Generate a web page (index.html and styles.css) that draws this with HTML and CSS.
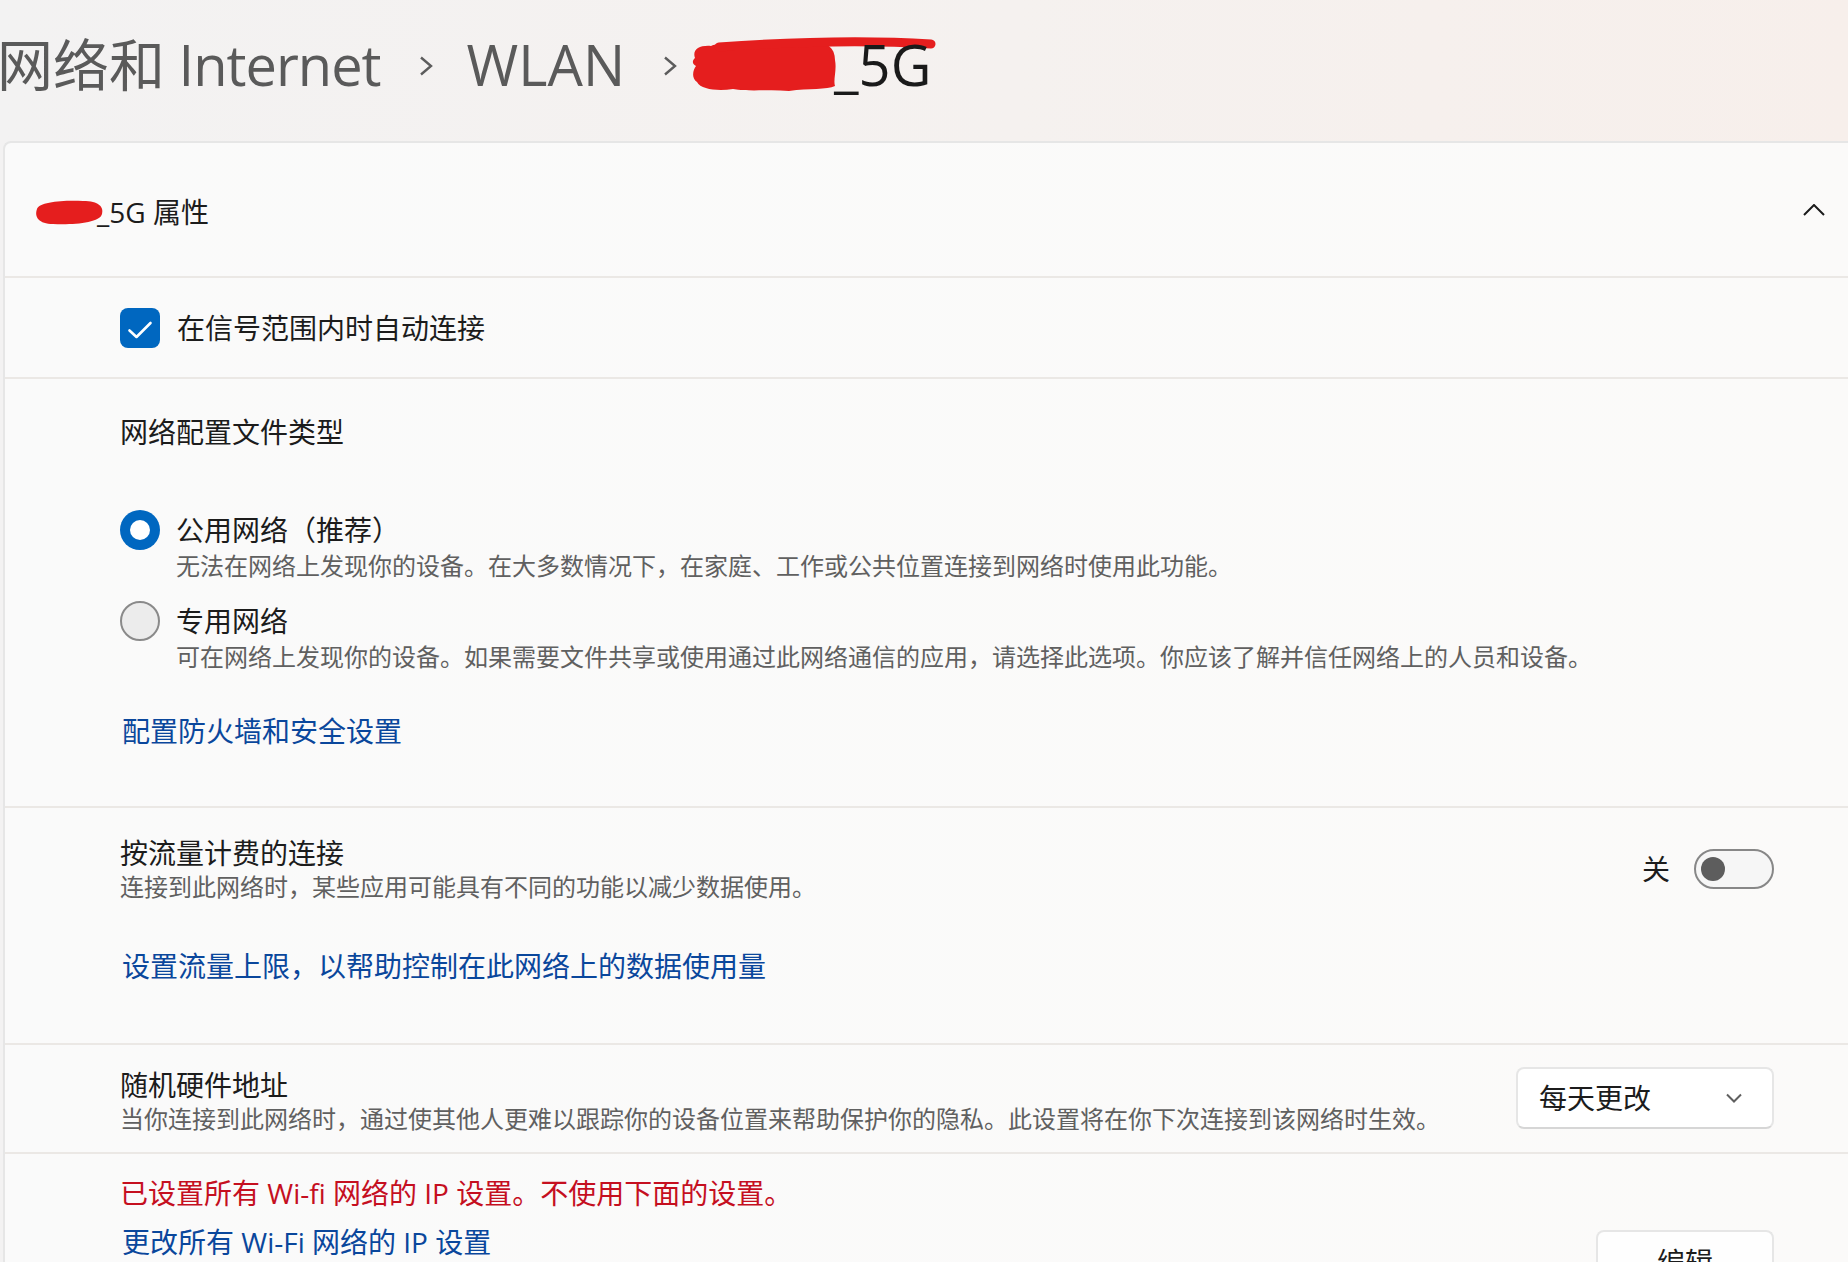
FILE: index.html
```html
<!DOCTYPE html>
<html lang="zh-CN">
  <head>
    <meta charset="UTF-8" />
    <meta name="viewport" content="width=device-width, initial-scale=1.0" />
    <title>WLAN 属性 - 设置</title>
    <link rel="stylesheet" href="styles.css">
  </head>
  <body>
    <header class="breadcrumb">
      <span class="crumb crumb-first"><span class="crumb-cjk">网络和</span> Internet</span>
      <svg class="crumb-sep" width="14" height="20" viewBox="0 0 14 20">
        <polyline points="2,1.5 12,10 2,18.5" />
      </svg>
      <span class="crumb">WLAN</span>
      <svg class="crumb-sep" width="14" height="20" viewBox="0 0 14 20">
        <polyline points="2,1.5 12,10 2,18.5" />
      </svg>
      <span class="crumb crumb-current">
        <svg class="redact" width="145" height="56" viewBox="0 0 145 56">
          <path d="M6,22 C3,14 10,9 22,10 C30,6 48,9 60,7 C80,5 100,8 120,6 C136,5 146,10 146,24 C148,34 144,44 146,50 C138,54 120,52 100,55 C80,53 62,56 44,53 C30,55 12,54 8,46 C2,42 4,34 7,30 C2,27 4,24 6,22 Z" />
          <path class="redact-stroke" d="M30,11 C100,6 180,4 242,8" />
        </svg>_5G
      </span>
    </header>

    <section class="card">
      <div class="card-header">
        <div class="card-title">
          <svg class="redact redact-small" width="70" height="26" viewBox="0 0 70 26">
            <path d="M4,10 C6,3 30,1 50,2 C66,2 71,8 69,15 C67,24 40,26 20,25 C6,25 1,18 4,10 Z" />
          </svg>_5G 属性
        </div>
        <svg class="chevron-up" width="22" height="12" viewBox="0 0 22 12">
          <polyline points="1,11 11,1 21,11" />
        </svg>
      </div>

      <div class="row row-check">
        <label class="checkbox">
          <span class="checkbox-box">
            <svg width="40" height="40" viewBox="0 0 40 40">
              <polyline points="9.5,22.5 16.5,29 30.5,15" />
            </svg>
          </span>
          在信号范围内时自动连接
        </label>
      </div>

      <div class="row row-profile">
        <div class="row-label">网络配置文件类型</div>
        <div class="radio-list">
          <div class="radio">
            <span class="radio-dot checked"></span>
            <div class="radio-text">
              <div class="radio-title">公用网络（推荐）</div>
              <div class="desc">无法在网络上发现你的设备。在大多数情况下，在家庭、工作或公共位置连接到网络时使用此功能。</div>
            </div>
          </div>
          <div class="radio">
            <span class="radio-dot"></span>
            <div class="radio-text">
              <div class="radio-title">专用网络</div>
              <div class="desc">可在网络上发现你的设备。如果需要文件共享或使用通过此网络通信的应用，请选择此选项。你应该了解并信任网络上的人员和设备。</div>
            </div>
          </div>
        </div>
        <div class="link-line link-firewall">
          <a href="#" class="link">配置防火墙和安全设置</a>
        </div>
      </div>

      <div class="row row-metered">
        <div class="setting">
          <div class="setting-text">
            <div class="setting-title">按流量计费的连接</div>
            <div class="desc">连接到此网络时，某些应用可能具有不同的功能以减少数据使用。</div>
          </div>
          <div class="toggle-wrap">
            <span class="toggle-label">关</span>
            <span class="toggle"><span class="toggle-knob"></span></span>
          </div>
        </div>
        <div class="link-line link-limit">
          <a href="#" class="link">设置流量上限，以帮助控制在此网络上的数据使用量</a>
        </div>
      </div>

      <div class="row row-random">
        <div class="setting">
          <div class="setting-text">
            <div class="setting-title">随机硬件地址</div>
            <div class="desc">当你连接到此网络时，通过使其他人更难以跟踪你的设备位置来帮助保护你的隐私。此设置将在你下次连接到该网络时生效。</div>
          </div>
          <div class="dropdown">
            <span>每天更改</span>
            <svg width="16" height="10" viewBox="0 0 16 10">
              <polyline points="1,1.5 8,8.5 15,1.5" />
            </svg>
          </div>
        </div>
      </div>

      <div class="row row-ip">
        <div class="setting setting-ip">
          <div class="setting-text">
            <div class="warning">已设置所有 Wi-fi 网络的 IP 设置。不使用下面的设置。</div>
            <div class="link-line link-ip">
              <a href="#" class="link">更改所有 Wi-Fi 网络的 IP 设置</a>
            </div>
          </div>
          <div class="ip-action">
            <button type="button" class="btn">编辑</button>
          </div>
        </div>
      </div>
    </section>
  </body>
</html>
```

FILE: styles.css
```css
* {
  margin: 0;
  padding: 0;
  box-sizing: border-box;
}

body {
  font-family: "Open Sans", "Noto Sans CJK SC", sans-serif;
  background: linear-gradient(90deg, #f3f2f2 0%, #f5f1ef 55%, #f7efeb 100%);
  color: #1c1c1c;
  height: 1262px;
  overflow: hidden;
}

/* breadcrumb title */
.breadcrumb {
  display: flex;
  align-items: center;
  height: 141px;
  padding: 26px 0 39px 0;
  margin-left: -3px;
  font-size: 56px;
  line-height: 76px;
  font-weight: 500;
  color: #5a5a5a;
  white-space: nowrap;
}

.crumb-first {
  letter-spacing: -1px;
}

.crumb-cjk {
  font-weight: 400;
  letter-spacing: 0;
}

.crumb-sep {
  margin: 4px 34px 0 38px;
  fill: none;
  stroke: #5c5c5c;
  stroke-width: 2.4;
}

.crumb-sep + .crumb-current {
  margin-left: -22px;
}

.crumb-current {
  display: inline-flex;
  align-items: center;
  color: #1a1a1a;
}

.redact {
  overflow: visible;
  fill: #e51e1e;
  flex-shrink: 0;
}

.redact-stroke {
  fill: none;
  stroke: #e51e1e;
  stroke-width: 9;
  stroke-linecap: round;
}

/* card */
.card {
  margin-left: 3px;
  width: 1900px;
  border: 2px solid #e6e6e6;
  border-right: none;
  border-radius: 8px 0 0 0;
  background: linear-gradient(90deg, #fafafa 0%, #fbfaf9 100%);
}

.card-header {
  display: flex;
  align-items: center;
  justify-content: space-between;
  height: 135px;
  padding: 4px 78px 0 28px;
  border-bottom: 2px solid #ebe8e5;
}

.card-title {
  display: flex;
  align-items: center;
  font-size: 28px;
  line-height: 40px;
  color: #1c1c1c;
}

.redact-small {
  margin-right: -6px;
}

.chevron-up {
  margin-top: -4px;
  fill: none;
  stroke: #1b1b1b;
  stroke-width: 2;
}

.row {
  padding: 0 129px 0 115px;
  border-bottom: 2px solid #ebe8e5;
  font-size: 28px;
  line-height: 40px;
}

.row:last-child {
  border-bottom: none;
}

/* checkbox */
.row-check {
  display: flex;
  align-items: center;
  height: 101px;
}

.checkbox {
  display: flex;
  align-items: center;
  gap: 17px;
}

.checkbox-box {
  width: 40px;
  height: 40px;
  border-radius: 8px;
  background: #0067c0;
}

.checkbox-box svg {
  display: block;
  fill: none;
  stroke: #ffffff;
  stroke-width: 2.6;
  stroke-linecap: round;
  stroke-linejoin: round;
}

/* profile type */
.row-profile {
  padding-top: 33px;
  padding-bottom: 55px;
}

.radio-list {
  margin-top: 58px;
  display: flex;
  flex-direction: column;
  gap: 19px;
}

.radio {
  display: flex;
  align-items: flex-start;
  gap: 16px;
}

.radio-dot {
  flex-shrink: 0;
  width: 40px;
  height: 40px;
  border-radius: 50%;
  border: 2px solid #8a8a8a;
  background: #ececec;
}

.radio-dot.checked {
  border: none;
  background: #0067c0;
  display: flex;
  align-items: center;
  justify-content: center;
}

.radio-dot.checked::after {
  content: "";
  width: 20px;
  height: 20px;
  border-radius: 50%;
  background: #ffffff;
}

.desc {
  font-size: 24px;
  line-height: 32px;
  color: #606060;
}

.link-line {
  padding-left: 2px;
}

.link {
  color: #0a479c;
  text-decoration: none;
}

.link-firewall {
  margin-top: 38px;
}

/* metered */
.row-metered {
  padding-top: 27px;
  padding-bottom: 57px;
}

.setting {
  display: flex;
  align-items: center;
  justify-content: space-between;
}

.setting-title {
  line-height: 36px;
}

.toggle-wrap {
  display: flex;
  align-items: center;
  gap: 24px;
}

.toggle {
  display: flex;
  align-items: center;
  width: 80px;
  height: 40px;
  padding-left: 5px;
  border: 2px solid #878787;
  border-radius: 20px;
  background: #f6f6f6;
}

.toggle-knob {
  width: 24px;
  height: 24px;
  border-radius: 50%;
  background: #5d5d5d;
}

.link-limit {
  margin-top: 43px;
}

/* random hardware address */
.row-random {
  padding-top: 22px;
  padding-bottom: 17px;
}

.dropdown {
  align-self: flex-start;
  display: flex;
  align-items: center;
  justify-content: space-between;
  width: 258px;
  height: 62px;
  padding: 0 30px 0 21px;
  border: 2px solid #e6e6e6;
  border-bottom-color: #d6d6d6;
  border-radius: 8px;
  background: #ffffff;
}

.dropdown svg {
  fill: none;
  stroke: #5f5f5f;
  stroke-width: 2;
}

/* ip */
.row-ip {
  padding-top: 19px;
}

.setting-ip {
  align-items: flex-start;
}

.warning {
  color: #c50f1f;
}

.link-ip {
  margin-top: 9px;
}

.ip-action {
  padding-top: 57px;
}

.btn {
  width: 178px;
  height: 62px;
  border: 2px solid #e6e6e6;
  border-bottom-color: #d6d6d6;
  border-radius: 8px;
  background: #fefefe;
  font-family: inherit;
  font-size: 28px;
  color: #1c1c1c;
}
```
